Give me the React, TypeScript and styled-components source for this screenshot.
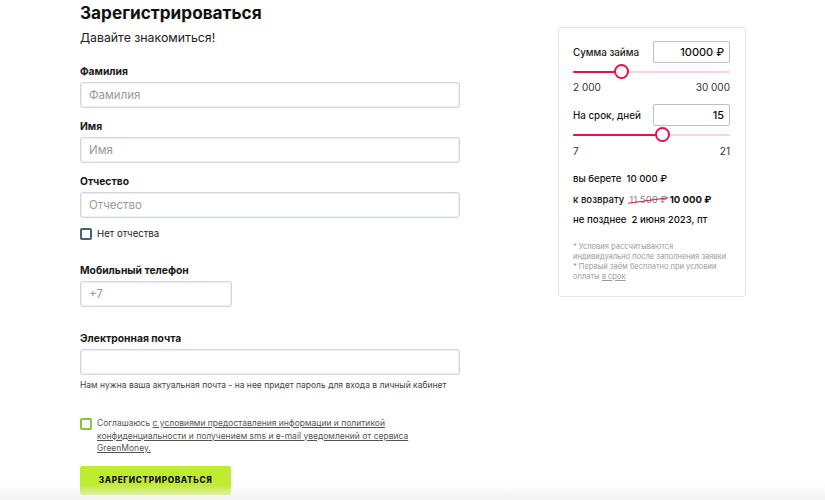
import React from "react";
import styled, { createGlobalStyle } from "styled-components";

const Global = createGlobalStyle`
  html, body { margin: 0; padding: 0; background: #fff; }
  body { font-family: Inter, "Noto Sans", Arial, sans-serif; color: #1a1a1a; }
  * { box-sizing: border-box; }
`;

const Page = styled.div`
  display: flex;
  align-items: flex-start;
  gap: 98px;
  padding: 0 0 0 80px;
  width: 825px;
  height: 500px;
  overflow: hidden;
`;

const FormCol = styled.div`
  width: 380px;
  display: flex;
  flex-direction: column;
`;

const Title = styled.h1`
  margin: 1px 0 0;
  font-size: 17.2px;
  line-height: 24px;
  font-weight: 700;
  color: #111;
`;

const Subtitle = styled.p`
  margin: 4px 0 0;
  font-size: 12.3px;
  line-height: 18px;
  color: #222;
`;

const Field = styled.div<{ $top: number }>`
  display: flex;
  flex-direction: column;
  margin-top: ${(p) => p.$top}px;
`;

const Label = styled.label`
  font-size: 10.3px;
  line-height: 14px;
  font-weight: 700;
  color: #1a1a1a;
  margin-bottom: 4px;
`;

const Input = styled.input<{ $w?: number }>`
  width: ${(p) => (p.$w ? `${p.$w}px` : "100%")};
  height: 26px;
  border: 1px solid #cfd5db;
  border-radius: 3px;
  box-shadow: inset 0 0 0 1px #eef0f2;
  padding: 0 8px;
  font-family: inherit;
  font-size: 11.5px;
  color: #333;
  outline: none;
  &::placeholder { color: #9a9a9a; }
`;

const CheckRow = styled.label<{ $top: number }>`
  display: flex;
  align-items: flex-start;
  gap: 5px;
  margin-top: ${(p) => p.$top}px;
`;

const Box = styled.span<{ $color: string }>`
  flex: none;
  width: 12px;
  height: 12px;
  border: 2px solid ${(p) => p.$color};
  border-radius: 2px;
  background: #fff;
`;

const CheckText = styled.span`
  font-size: 9.6px;
  line-height: 12px;
  color: #222;
`;

const Hint = styled.p`
  margin: 5px 0 0;
  font-size: 8.5px;
  line-height: 11px;
  color: #444;
`;

const AgreeText = styled.span`
  font-size: 8.5px;
  line-height: 12.5px;
  color: #555;
  width: 320px;
  margin-top: -1px;
`;

const U = styled.span`
  text-decoration: underline;
  text-underline-offset: 1px;
`;

const Submit = styled.button`
  margin-top: 11px;
  width: 151px;
  height: 29px;
  border: none;
  border-radius: 2px;
  background: #bfec31;
  font-family: inherit;
  font-size: 8.3px;
  font-weight: 800;
  letter-spacing: 0.6px;
  color: #111;
  text-transform: uppercase;
`;

const Card = styled.aside`
  margin-top: 27px;
  width: 188px;
  border: 1px solid #e6e6e6;
  border-radius: 3px;
  padding: 13px 15px 14px 14px;
  display: flex;
  flex-direction: column;
`;

const ParamRow = styled.div<{ $top: number }>`
  display: flex;
  align-items: center;
  justify-content: space-between;
  margin-top: ${(p) => p.$top}px;
`;

const ParamLabel = styled.span`
  font-size: 9.8px;
  font-weight: 500;
  color: #1a1a1a;
`;

const ValueBox = styled.div`
  width: 77px;
  height: 22px;
  border: 1px solid #bfbfbf;
  border-radius: 2px;
  display: flex;
  align-items: center;
  justify-content: flex-end;
  padding-right: 5px;
  font-size: 11px;
  font-weight: 500;
  color: #111;
`;

const Track = styled.div`
  position: relative;
  height: 2px;
  margin-top: 8px;
  background: #fbd3da;
  border-radius: 1px;
`;

const Fill = styled.div`
  height: 2px;
  background: #e0124f;
  border-radius: 1px;
`;

const Thumb = styled.div`
  position: absolute;
  top: -7px;
  width: 15px;
  height: 15px;
  margin-left: -7.5px;
  border-radius: 50%;
  border: 2.3px solid #e0124f;
  background: #fff;
`;

const Range = styled.div<{ $top: number }>`
  display: flex;
  justify-content: space-between;
  margin-top: ${(p) => p.$top}px;
  font-size: 10px;
  color: #333;
`;

const Summary = styled.div`
  margin-top: 15px;
  display: flex;
  flex-direction: column;
  gap: 7.5px;
  font-size: 9.6px;
  font-weight: 500;
  line-height: 13px;
  color: #111;
`;

const Strike = styled.span`
  position: relative;
  color: #888;
  font-weight: 400;
  &::after {
    content: "";
    position: absolute;
    left: -1px;
    right: -1px;
    top: 6px;
    height: 1.3px;
    background: #e0124f;
    transform: rotate(-8deg);
  }
`;

const Bold = styled.b`
  font-weight: 700;
`;

const Notes = styled.p`
  margin: 16px 0 0;
  font-size: 7.5px;
  line-height: 10px;
  color: #9a9a9a;
`;

const Fade = styled.div`
  position: fixed;
  left: 0;
  right: 0;
  bottom: 0;
  height: 16px;
  background: linear-gradient(to bottom, rgba(240,240,240,0), rgba(240,240,240,0.9));
  pointer-events: none;
`;

function Slider({ pct }: { pct: number }) {
  return (
    <Track>
      <Fill style={{ width: `${pct}%` }} />
      <Thumb style={{ left: `${pct}%` }} />
    </Track>
  );
}

export default function App() {
  return (
    <>
      <Global />
      <Page>
        <FormCol>
          <Title>Зарегистрироваться</Title>
          <Subtitle>Давайте знакомиться!</Subtitle>

          <Field $top={17}>
            <Label>Фамилия</Label>
            <Input placeholder="Фамилия" />
          </Field>
          <Field $top={11}>
            <Label>Имя</Label>
            <Input placeholder="Имя" />
          </Field>
          <Field $top={11}>
            <Label>Отчество</Label>
            <Input placeholder="Отчество" />
          </Field>
          <CheckRow $top={10}>
            <Box $color="#4a6173" />
            <CheckText>Нет отчества</CheckText>
          </CheckRow>

          <Field $top={23}>
            <Label>Мобильный телефон</Label>
            <Input $w={152} placeholder="+7" />
          </Field>
          <Field $top={24}>
            <Label>Электронная почта</Label>
            <Input />
          </Field>
          <Hint>Нам нужна ваша актуальная почта - на нее придет пароль для входа в личный кабинет</Hint>

          <CheckRow $top={27}>
            <Box $color="#86c440" />
            <AgreeText>
              Соглашаюсь{" "}
              <U>
                с условиями предоставления информации и политикой конфиденциальности и получением sms и
                e-mail уведомлений от сервиса GreenMoney.
              </U>
            </AgreeText>
          </CheckRow>

          <Submit>Зарегистрироваться</Submit>
        </FormCol>

        <Card>
          <ParamRow $top={0}>
            <ParamLabel>Сумма займа</ParamLabel>
            <ValueBox>10000 ₽</ValueBox>
          </ParamRow>
          <Slider pct={31} />
          <Range $top={8}>
            <span>2 000</span>
            <span>30 000</span>
          </Range>
          <ParamRow $top={11}>
            <ParamLabel>На срок, дней</ParamLabel>
            <ValueBox>15</ValueBox>
          </ParamRow>
          <Slider pct={57} />
          <Range $top={9}>
            <span>7</span>
            <span>21</span>
          </Range>
          <Summary>
            <span>вы берете&nbsp; 10 000 ₽</span>
            <span>
              к возврату&nbsp; <Strike>11 500 ₽</Strike> <Bold>10 000 ₽</Bold>
            </span>
            <span>не позднее&nbsp; 2 июня 2023, пт</span>
          </Summary>
          <Notes>
            * Условия рассчитываются индивидуально после заполнения заявки
            <br />* Первый заём бесплатно при условии оплаты <U>в срок</U>
          </Notes>
        </Card>
      </Page>
      <Fade />
    </>
  );
}
